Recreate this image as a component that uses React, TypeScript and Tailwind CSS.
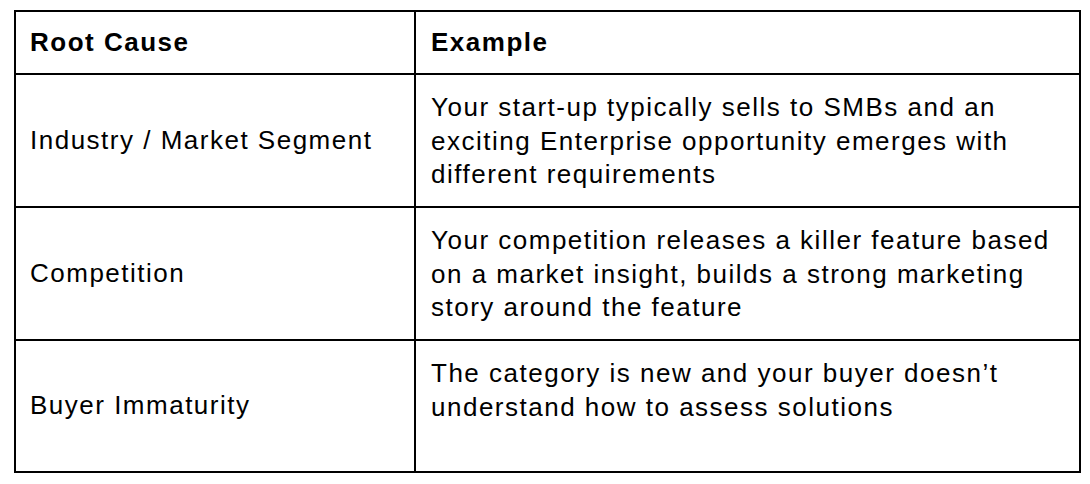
const rows = [
  {
    cause: "Industry / Market Segment",
    example: "Your start-up typically sells to SMBs and an exciting Enterprise opportunity emerges with different requirements",
  },
  {
    cause: "Competition",
    example: "Your competition releases a killer feature based on a market insight, builds a strong marketing story around the feature",
  },
  {
    cause: "Buyer Immaturity",
    example: "The category is new and your buyer doesn’t understand how to assess solutions",
  },
]

export default function App() {
  return (
    <div className="min-h-[484px] bg-white pt-[10px] pl-[14px] font-['Liberation_Sans',Arial,sans-serif] text-[26px] leading-[33.5px] tracking-[1.5px] text-black">
      <div className="grid w-fit grid-cols-[398px_663px] grid-rows-[61px_131px_131px_130px] gap-[2px] border-2 border-black bg-black">
        <div className="flex items-center bg-white pl-[14px] font-bold">Root Cause</div>
        <div className="flex items-center bg-white pl-[15px] font-bold">Example</div>
        {rows.map((r) => (
          <>
            <div key={r.cause + "-c"} className="flex items-center bg-white pl-[14px]">{r.cause}</div>
            <div key={r.cause + "-e"} className="bg-white pl-[15px] pr-[22px] pt-[16px]">{r.example}</div>
          </>
        ))}
      </div>
    </div>
  )
}
